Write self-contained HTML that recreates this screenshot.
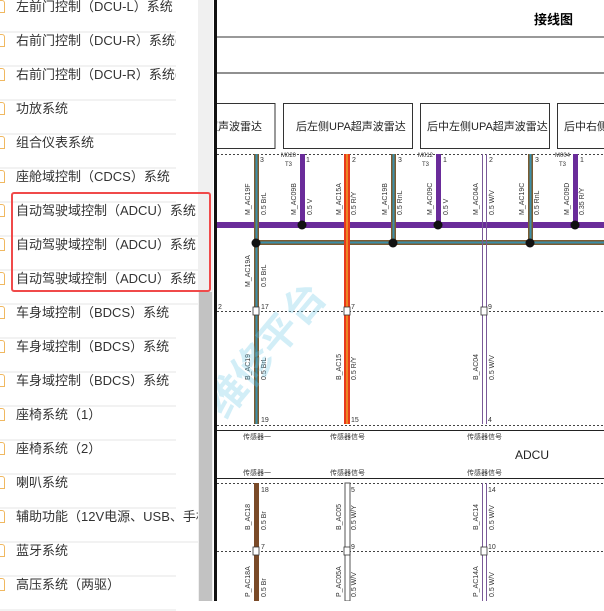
<!DOCTYPE html>
<html><head><meta charset="utf-8"><style>
html,body{margin:0;padding:0;width:604px;height:601px;overflow:hidden;background:#fff;font-family:"Liberation Sans","Noto Sans CJK SC",sans-serif}
.side{position:absolute;left:0;top:0;width:198px;height:601px;background:#fff}
.it{position:absolute;left:0;width:176px;height:32px;border-bottom:2px solid #f2f2f2;font-size:13px;color:#333;line-height:16px;white-space:nowrap;overflow:hidden}
.it span{position:absolute;left:16px;top:0}
.ic{position:absolute;left:-3px;top:1px;width:7px;height:11px;border:1px solid #f0b860;border-left:none;border-radius:0 3px 0 0}
.sb{position:absolute;left:198px;top:0;width:15px;height:601px;background:#f0f0f0}
.th{position:absolute;left:199px;top:292px;width:13px;height:309px;background:#c2c2c2}
.red{position:absolute;left:11px;top:192px;width:196px;height:96px;border:2px solid #f04a4a;border-radius:3px}
</style></head><body>
<div class="side">
<div class="it" style="top:-1px"><div class="ic"></div><span>左前门控制（DCU-L）系统</span></div>
<div class="it" style="top:33px"><div class="ic"></div><span>右前门控制（DCU-R）系统(1)</span></div>
<div class="it" style="top:67px"><div class="ic"></div><span>右前门控制（DCU-R）系统((2)</span></div>
<div class="it" style="top:101px"><div class="ic"></div><span>功放系统</span></div>
<div class="it" style="top:135px"><div class="ic"></div><span>组合仪表系统</span></div>
<div class="it" style="top:169px"><div class="ic"></div><span>座舱域控制（CDCS）系统</span></div>
<div class="it" style="top:203px;width:206px"><div class="ic"></div><span>自动驾驶域控制（ADCU）系统</span></div>
<div class="it" style="top:237px;width:206px"><div class="ic"></div><span>自动驾驶域控制（ADCU）系统</span></div>
<div class="it" style="top:271px;width:206px"><div class="ic"></div><span>自动驾驶域控制（ADCU）系统</span></div>
<div class="it" style="top:305px"><div class="ic"></div><span>车身域控制（BDCS）系统（1）</span></div>
<div class="it" style="top:339px"><div class="ic"></div><span>车身域控制（BDCS）系统（2）</span></div>
<div class="it" style="top:373px"><div class="ic"></div><span>车身域控制（BDCS）系统（3）</span></div>
<div class="it" style="top:407px"><div class="ic"></div><span>座椅系统（1）</span></div>
<div class="it" style="top:441px"><div class="ic"></div><span>座椅系统（2）</span></div>
<div class="it" style="top:475px"><div class="ic"></div><span>喇叭系统</span></div>
<div class="it" style="top:509px;width:198px"><div class="ic"></div><span>辅助功能（12V电源、USB、手机</span></div>
<div class="it" style="top:543px"><div class="ic"></div><span>蓝牙系统</span></div>
<div class="it" style="top:577px"><div class="ic"></div><span>高压系统（两驱）</span></div>
</div>
<div class="sb"></div><div class="th"></div>
<div class="red"></div>
<svg style="position:absolute;left:0;top:0" width="604" height="601" font-family="Liberation Sans" >
<defs><clipPath id="c"><rect x="217" y="0" width="400" height="601"/></clipPath></defs>
<rect x="214" y="0" width="3" height="601" fill="#111"/>
<g clip-path="url(#c)">
<text x="534" y="24" font-size="13" font-weight="bold" font-family="Noto Sans CJK SC">接线图</text>
<line x1="217" y1="37" x2="604" y2="37" stroke="#333" stroke-width="1"/>
<line x1="217" y1="73" x2="604" y2="73" stroke="#222" stroke-width="1"/>
<g fill="#fff" stroke="#333">
<rect x="190" y="103.5" width="85" height="45"/><rect x="283.5" y="103.5" width="129" height="45"/><rect x="420.5" y="103.5" width="129" height="45"/><rect x="557.5" y="103.5" width="60" height="45"/></g>
<g font-size="11" fill="#222" font-family="Liberation Sans,Noto Sans CJK SC">
<text x="207" y="130">超声波雷达</text><text x="296" y="130">后左侧UPA超声波雷达</text><text x="427" y="130">后中左侧UPA超声波雷达</text><text x="564" y="130">后中右侧</text></g>
<g stroke="#444" stroke-dasharray="2,2" stroke-width="1">
<line x1="217" y1="154.5" x2="604" y2="154.5"/><line x1="217" y1="311.5" x2="604" y2="311.5"/><line x1="217" y1="425.5" x2="604" y2="425.5"/><line x1="217" y1="483.5" x2="604" y2="483.5"/><line x1="217" y1="551.5" x2="604" y2="551.5"/></g>
<line x1="217" y1="430.5" x2="604" y2="430.5" stroke="#222"/><line x1="217" y1="478.5" x2="604" y2="478.5" stroke="#222"/>
<rect x="217" y="222" width="387" height="6" fill="#6a2c9a"/>
<rect x="256" y="240" width="348" height="5" fill="#7a5a30"/><rect x="256" y="241.5" width="348" height="2" fill="#3a8fa8"/>
<g><rect x="254" y="154" width="5" height="270" fill="#7a5a30"/><rect x="255.5" y="154" width="2" height="270" fill="#3a8fa8"/>
<rect x="391" y="154" width="5" height="90" fill="#7a5a30"/><rect x="392.5" y="154" width="2" height="90" fill="#3a8fa8"/>
<rect x="528" y="154" width="5" height="90" fill="#7a5a30"/><rect x="529.5" y="154" width="2" height="90" fill="#3a8fa8"/>
<rect x="254" y="483" width="5" height="118" fill="#7a4a28"/>
<rect x="300" y="154" width="5" height="72" fill="#6a2c9a"/><rect x="436" y="154" width="5" height="72" fill="#6a2c9a"/><rect x="573" y="154" width="5" height="72" fill="#6a2c9a"/>
<rect x="344" y="154" width="6" height="270" fill="#e83a1a"/><rect x="346.5" y="154" width="1" height="270" fill="#f0d030"/>
<rect x="345" y="483" width="5" height="118" fill="#fff" stroke="#555" stroke-width="1"/>
<g stroke="#7a5a98" stroke-width="1"><line x1="482.5" y1="154" x2="482.5" y2="424"/><line x1="486.5" y1="154" x2="486.5" y2="424"/><line x1="482.5" y1="483" x2="482.5" y2="601"/><line x1="486.5" y1="483" x2="486.5" y2="601"/></g>
</g>
<g fill="#111"><circle cx="302" cy="225" r="4.5"/><circle cx="256" cy="243" r="4.5"/><circle cx="393" cy="243" r="4.5"/><circle cx="438" cy="225" r="4.5"/><circle cx="530" cy="243" r="4.5"/><circle cx="575" cy="225" r="4.5"/></g>
<g fill="#fff" stroke="#333" stroke-width="0.8"><rect x="253" y="307" width="6" height="8"/><rect x="344" y="307" width="6" height="8"/><rect x="481" y="307" width="6" height="8"/><rect x="253" y="547" width="6" height="8"/><rect x="344" y="547" width="6" height="8"/><rect x="481" y="547" width="6" height="8"/></g>
<g font-size="7" fill="#333">
<text x="260" y="162">3</text><text x="306" y="162">1</text><text x="352" y="162">2</text><text x="398" y="162">3</text><text x="443" y="162">1</text><text x="489" y="162">2</text><text x="535" y="162">3</text><text x="580" y="162">1</text>
<text x="281" y="157" font-size="6">M020</text><text x="285" y="166" font-size="6">T3</text><text x="418" y="157" font-size="6">M012</text><text x="422" y="166" font-size="6">T3</text><text x="555" y="157" font-size="6">M004</text><text x="559" y="166" font-size="6">T3</text>
<text x="261" y="309">17</text><text x="351" y="309">7</text><text x="488" y="309">9</text><text x="218" y="309">2</text>
<text x="261" y="422">19</text><text x="351" y="422">15</text><text x="488" y="422">4</text>
<text x="261" y="492">18</text><text x="351" y="492">5</text><text x="488" y="492">14</text>
<text x="261" y="549">7</text><text x="351" y="549">9</text><text x="488" y="549">10</text>
<text x="243" y="439" font-family="Noto Sans CJK SC">传感器一</text><text x="330" y="439" font-family="Noto Sans CJK SC">传感器信号</text><text x="467" y="439" font-family="Noto Sans CJK SC">传感器信号</text>
<text x="243" y="475" font-family="Noto Sans CJK SC">传感器一</text><text x="330" y="475" font-family="Noto Sans CJK SC">传感器信号</text><text x="467" y="475" font-family="Noto Sans CJK SC">传感器信号</text>
</g>
<text x="515" y="459" font-size="12" fill="#222">ADCU</text>
<g font-size="7" fill="#333">
<text transform="translate(250,215) rotate(-90)">M_AC19F</text><text transform="translate(266,215) rotate(-90)">0.5 BrL</text>
<text transform="translate(296,215) rotate(-90)">M_AC09B</text><text transform="translate(312,215) rotate(-90)">0.5 V</text>
<text transform="translate(341,215) rotate(-90)">M_AC15A</text><text transform="translate(356,215) rotate(-90)">0.5 R/Y</text>
<text transform="translate(387,215) rotate(-90)">M_AC19B</text><text transform="translate(402,215) rotate(-90)">0.5 RnL</text>
<text transform="translate(432,215) rotate(-90)">M_AC09C</text><text transform="translate(448,215) rotate(-90)">0.5 V</text>
<text transform="translate(478,215) rotate(-90)">M_AC04A</text><text transform="translate(494,215) rotate(-90)">0.5 W/V</text>
<text transform="translate(524,215) rotate(-90)">M_AC19C</text><text transform="translate(539,215) rotate(-90)">0.5 RnL</text>
<text transform="translate(569,215) rotate(-90)">M_AC09D</text><text transform="translate(584,215) rotate(-90)">0.35 R/Y</text>
<text transform="translate(250,287) rotate(-90)">M_AC19A</text><text transform="translate(266,287) rotate(-90)">0.5 BrL</text>
<text transform="translate(250,380) rotate(-90)">B_AC19</text><text transform="translate(266,380) rotate(-90)">0.5 BrL</text>
<text transform="translate(341,380) rotate(-90)">B_AC15</text><text transform="translate(356,380) rotate(-90)">0.5 R/Y</text>
<text transform="translate(478,380) rotate(-90)">B_AC04</text><text transform="translate(494,380) rotate(-90)">0.5 W/V</text>
<text transform="translate(250,530) rotate(-90)">B_AC18</text><text transform="translate(266,530) rotate(-90)">0.5 Br</text>
<text transform="translate(341,530) rotate(-90)">B_AC05</text><text transform="translate(356,530) rotate(-90)">0.5 W/Y</text>
<text transform="translate(478,530) rotate(-90)">B_AC14</text><text transform="translate(494,530) rotate(-90)">0.5 W/V</text>
<text transform="translate(250,597) rotate(-90)">P_AC18A</text><text transform="translate(266,597) rotate(-90)">0.5 Br</text>
<text transform="translate(341,597) rotate(-90)">P_AC05A</text><text transform="translate(356,597) rotate(-90)">0.5 W/V</text>
<text transform="translate(478,597) rotate(-90)">P_AC14A</text><text transform="translate(494,597) rotate(-90)">0.5 W/V</text>
</g>
<text transform="translate(225,420) rotate(-50)" font-size="40" fill="#6cc8e8" opacity="0.3" font-family="Noto Sans CJK SC" font-weight="bold">维修平台</text>
</g>
</svg>
</body></html>
